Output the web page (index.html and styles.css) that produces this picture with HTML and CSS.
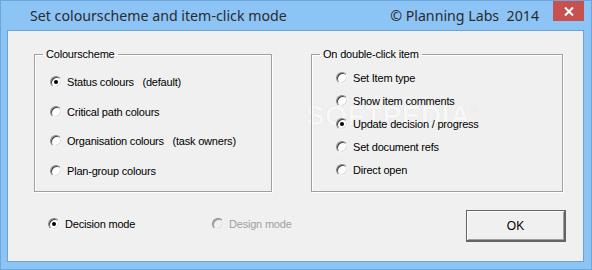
FILE: index.html
```html
<!DOCTYPE html>
<html>

<head lang="en">
    <meta charset="UTF-8">
    <title>Set colourscheme and item-click mode</title>
    <link rel="stylesheet" href="styles.css">
</head>

<body>
    <div class="window">
        <div class="titlebar">
            <span class="title">Set colourscheme and item-click mode</span>
            <span class="copyright">© Planning Labs  2014</span>
            <span class="close">
                <svg width="10" height="9" viewBox="0 0 10 9">
                    <path d="M1 0.5 L9 8.5 M9 0.5 L1 8.5" stroke="#fff" stroke-width="2" />
                </svg>
            </span>
        </div>
        <div class="client">
            <div class="watermark">SOFTPEDIA<sup>®</sup></div>
            <div class="groups">
                <fieldset class="group group-left">
                    <legend>Colourscheme</legend>
                    <div class="opt"><span class="radio on"></span><span class="txt">Status colours   (default)</span></div>
                    <div class="opt"><span class="radio"></span><span class="txt">Critical path colours</span></div>
                    <div class="opt"><span class="radio"></span><span class="txt">Organisation colours   (task owners)</span></div>
                    <div class="opt"><span class="radio"></span><span class="txt">Plan-group colours</span></div>
                </fieldset>
                <fieldset class="group group-right">
                    <legend>On double-click item</legend>
                    <div class="opt"><span class="radio"></span><span class="txt">Set Item type</span></div>
                    <div class="opt"><span class="radio"></span><span class="txt">Show item comments</span></div>
                    <div class="opt"><span class="radio on"></span><span class="txt">Update decision / progress</span></div>
                    <div class="opt"><span class="radio"></span><span class="txt">Set document refs</span></div>
                    <div class="opt"><span class="radio"></span><span class="txt">Direct open</span></div>
                </fieldset>
            </div>
            <div class="footer">
                <div class="opt mode"><span class="radio on"></span><span class="txt">Decision mode</span></div>
                <div class="opt mode disabled"><span class="radio"></span><span class="txt">Design mode</span></div>
                <button class="ok">OK</button>
            </div>
        </div>
    </div>
</body>

</html>
```

FILE: styles.css
```css
* {
    margin: 0;
    padding: 0;
    box-sizing: border-box;
}

body {
    width: 592px;
    height: 270px;
    font-family: "Liberation Sans", Arial, sans-serif;
    font-size: 11px;
    letter-spacing: -0.2px;
    color: #000;
}

.window {
    width: 592px;
    height: 270px;
    background-color: #8cc4f6;
    border: 1px solid #6ea7db;
    display: flex;
    flex-direction: column;
    padding: 0 7px 7px 6px;
}

.titlebar {
    height: 29px;
    display: flex;
    align-items: flex-start;
    font-family: "Noto Sans", "Open Sans", sans-serif;
    font-size: 14.2px;
    letter-spacing: 0;
    color: #2b2b2b;
}

.title {
    margin-left: 23px;
    margin-top: 5px;
    white-space: pre;
}

.copyright {
    margin-left: auto;
    margin-top: 5px;
    white-space: pre;
}

.close {
    width: 31px;
    height: 20px;
    margin-left: 14px;
    background-color: #c75050;
    display: flex;
    align-items: center;
    justify-content: center;
}

.client {
    flex: 1;
    position: relative;
    background-color: #f0f0f0;
    border: 1px solid #6fa2d2;
}

.groups {
    position: relative;
    display: flex;
    gap: 39px;
    padding: 17px 0 0 26px;
}

.group {
    height: 144px;
    border: 1px solid #a0a0a0;
    box-shadow: 1px 1px 0 #fff, inset 1px 1px 0 #fff;
    display: flex;
    flex-direction: column;
}

.group legend {
    padding: 0 3px;
    line-height: 13px;
}

.group-left {
    width: 238px;
    padding: 13px 0 0 15px;
    gap: 13.5px;
}

.group-left legend {
    margin-left: -7px;
}

.group-right {
    width: 252px;
    padding: 9px 0 0 24px;
    gap: 7px;
}

.group-right legend {
    margin-left: -16px;
}

.opt {
    height: 16px;
    display: flex;
    align-items: center;
    gap: 5px;
}

.txt {
    white-space: pre;
}

.radio {
    width: 12px;
    height: 12px;
    border-radius: 50%;
    background-color: #fff;
    border: 1px solid;
    border-color: #8a8a8a #f4f4f4 #f4f4f4 #8a8a8a;
    box-shadow: inset 1px 1px 0 #404040, inset -1px -1px 0 #dcdcdc;
    display: flex;
    align-items: center;
    justify-content: center;
    flex-shrink: 0;
}

.radio.on::after {
    content: "";
    width: 4px;
    height: 4px;
    border-radius: 50%;
    background-color: #000;
}

.footer {
    display: flex;
    align-items: flex-start;
    padding: 18px 17px 0 40px;
}

.mode {
    width: 164px;
    margin-top: 6px;
}

.disabled .txt {
    color: #a0a0a0;
}

.disabled .radio {
    background-color: #f0f0f0;
    box-shadow: inset 1px 1px 0 #a0a0a0, inset -1px -1px 0 #e0e0e0;
}

.ok {
    margin-left: auto;
    width: 100px;
    height: 32px;
    background-color: #f0f0f0;
    border: 1px solid #646464;
    border-right-width: 2px;
    border-bottom-width: 2px;
    box-shadow: inset 1px 1px 0 #fff, inset -1px -1px 0 #a0a0a0;
    font-family: "Liberation Sans", Arial, sans-serif;
    font-size: 12px;
    color: #000;
}

/* faint watermark over the right group */
.watermark {
    position: absolute;
    left: 298px;
    top: 69px;
    font-family: "Liberation Sans", Arial, sans-serif;
    font-weight: bold;
    font-size: 28px;
    letter-spacing: 0.5px;
    color: #f7f7f7;
    text-shadow: 0 0 1px #d6d6d6;
}

.watermark sup {
    font-size: 10px;
    vertical-align: 12px;
}
```
